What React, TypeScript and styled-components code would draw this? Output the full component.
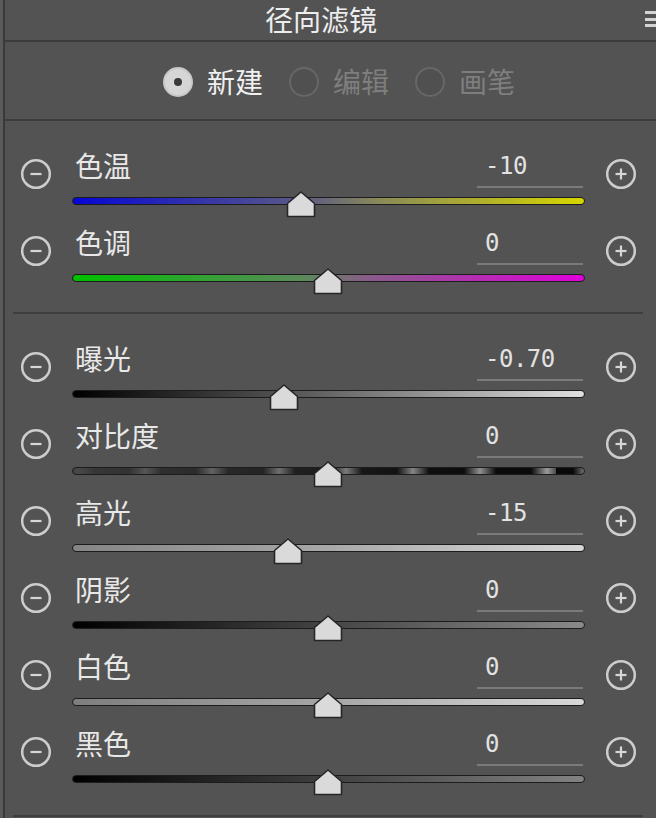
import React from "react";
import styled, { createGlobalStyle } from "styled-components";

const GlobalStyle = createGlobalStyle`
  html, body { margin: 0; padding: 0; background: #5a5a5a; }
  body {
    width: 656px;
    height: 818px;
    overflow: hidden;
    font-family: "Noto Sans CJK SC", "Noto Sans", sans-serif;
  }
`;

const Panel = styled.div`
  margin-left: 3px;
  height: 818px;
  border-left: 2px solid #3a3a3a;
  background: #535353;
  display: flex;
  flex-direction: column;
`;

const Header = styled.div`
  position: relative;
  height: 40px;
  border-bottom: 2px solid #3c3c3c;
  display: flex;
  align-items: center;
  justify-content: center;
`;

const Title = styled.div`
  margin-right: 19px;
  font-size: 28px;
  line-height: 36px;
  color: #ededed;
  margin-top: -3px;
`;

const MenuIcon = styled.div`
  position: absolute;
  right: 0;
  top: 11px;
  width: 11px;
  height: 16px;
  display: flex;
  flex-direction: column;
  justify-content: space-between;
  & > span {
    display: block;
    height: 3px;
    background: #d4d4d4;
  }
`;

const RadioBar = styled.div`
  height: 79px;
  border-bottom: 2px solid #3c3c3c;
  display: flex;
  align-items: center;
  padding-left: 158px;
  padding-top: 3px;
  box-sizing: border-box;
`;

const RadioItem = styled.div`
  display: flex;
  align-items: center;
  gap: 14px;
  margin-right: 26px;
`;

const RadioDot = styled.div<{ $on?: boolean }>`
  width: 30px;
  height: 30px;
  border-radius: 50%;
  box-sizing: border-box;
  display: flex;
  align-items: center;
  justify-content: center;
  background: ${(p) => (p.$on ? "#d6d6d6" : "#505050")};
  border: 2px solid ${(p) => (p.$on ? "#c8c8c8" : "#676767")};
  &::after {
    content: "";
    display: ${(p) => (p.$on ? "block" : "none")};
    width: 8px;
    height: 8px;
    border-radius: 50%;
    background: #3a3a3a;
  }
`;

const RadioLabel = styled.span<{ $on?: boolean }>`
  font-size: 28px;
  line-height: 36px;
  color: ${(p) => (p.$on ? "#f0f0f0" : "#7e7e7e")};
  margin-top: -2px;
`;

const Sliders = styled.div`
  padding-top: 27px;
  display: flex;
  flex-direction: column;
`;

const Row = styled.div`
  height: 77px;
  display: grid;
  grid-template-columns: 67px 513px 1fr;
`;

const IconCell = styled.div<{ $left?: boolean }>`
  padding-top: 10px;
  display: flex;
  justify-content: ${(p) => (p.$left ? "flex-start" : "center")};
  padding-left: ${(p) => (p.$left ? "15px" : "0")};
`;

const Content = styled.div`
  display: flex;
  flex-direction: column;
`;

const TopLine = styled.div`
  height: 42px;
  display: flex;
  justify-content: space-between;
  align-items: flex-start;
`;

const Label = styled.span`
  padding-left: 3px;
  font-size: 28px;
  line-height: 36px;
  color: #e8e8e8;
  margin-top: -1px;
`;

const ValueBox = styled.div`
  width: 106px;
  height: 40px;
  margin-right: 2px;
  box-sizing: border-box;
  border-bottom: 2px solid #7a7a7a;
  padding-left: 8px;
  padding-top: 2px;
  font-family: "DejaVu Sans Mono", "Liberation Mono", monospace;
  font-size: 24px;
  line-height: 32px;
  color: #e2e2e2;
  letter-spacing: -0.5px;
`;

const Track = styled.div<{ $bg: string }>`
  position: relative;
  margin-top: 7px;
  height: 8px;
  box-sizing: border-box;
  border: 1.5px solid #1c1c1c;
  border-radius: 4px;
  background: ${(p) => p.$bg};
`;

const Thumb = styled.svg`
  position: absolute;
  top: -7px;
  width: 30px;
  height: 27px;
  overflow: visible;
`;

const Separator = styled.div<{ $top: number; $bottom: number }>`
  height: 2px;
  background: #3e3e3e;
  margin: ${(p) => `${p.$top}px 13px ${p.$bottom}px 8px`};
`;

const CircleIcon: React.FC<{ plus?: boolean }> = ({ plus }) => (
  <svg width="32" height="32" viewBox="0 0 32 32">
    <circle cx="16" cy="16" r="13.8" fill="none" stroke="#cdcdcd" strokeWidth="2.5" />
    <line x1="10.5" y1="16" x2="21.5" y2="16" stroke="#d6d6d6" strokeWidth="2.2" />
    {plus && <line x1="16" y1="10.5" x2="16" y2="21.5" stroke="#d6d6d6" strokeWidth="2.2" />}
  </svg>
);

const contrastBg = `linear-gradient(to right, rgba(62,62,62,0.9) 0%, rgba(62,62,62,0.55) 35%, rgba(40,40,40,0.2) 70%, rgba(0,0,0,0) 100%) 0 0 / 100% 100%,
  repeating-linear-gradient(to right, #080808 0px, #080808 17px, #a0a0a0 33px, #080808 49px, #080808 67px) -28px 0 / 100% 100%`;

type SliderDef = { label: string; value: string; pos: number; bg: string };

const group1: SliderDef[] = [
  { label: "色温", value: "-10", pos: 44.8, bg: "linear-gradient(to right, #0606d6 0%, #5a5a86 45%, #8a8a58 60%, #d6d600 100%)" },
  { label: "色调", value: "0", pos: 50, bg: "linear-gradient(to right, #00c000 0%, #5a8a5a 45%, #8a5a8a 58%, #e000dc 100%)" },
];

const group2: SliderDef[] = [
  { label: "曝光", value: "-0.70", pos: 41.5, bg: "linear-gradient(to right, #000 0%, #5a5a5a 45%, #e0e0e0 100%)" },
  { label: "对比度", value: "0", pos: 50, bg: contrastBg },
  { label: "高光", value: "-15", pos: 42.3, bg: "linear-gradient(to right, #858585 0%, #a8a8a8 50%, #d8d8d8 100%)" },
  { label: "阴影", value: "0", pos: 50, bg: "linear-gradient(to right, #000 0%, #3e3e3e 45%, #8a8a8a 100%)" },
  { label: "白色", value: "0", pos: 50, bg: "linear-gradient(to right, #7e7e7e 0%, #a6a6a6 50%, #d8d8d8 100%)" },
  { label: "黑色", value: "0", pos: 50, bg: "linear-gradient(to right, #000 0%, #3a3a3a 45%, #828282 100%)" },
];

const SliderRow: React.FC<SliderDef> = ({ label, value, pos, bg }) => (
  <Row>
    <IconCell $left>
      <CircleIcon />
    </IconCell>
    <Content>
      <TopLine>
        <Label>{label}</Label>
        <ValueBox>{value}</ValueBox>
      </TopLine>
      <Track $bg={bg}>
        <Thumb viewBox="0 0 30 27" style={{ left: `calc(${pos}% - 16px)` }}>
          <polygon
            points="15,1 28.5,12.5 28.5,25.5 1.5,25.5 1.5,12.5"
            fill="#dadada"
            stroke="#262626"
            strokeWidth="1.6"
            strokeLinejoin="round"
          />
        </Thumb>
      </Track>
    </Content>
    <IconCell>
      <CircleIcon plus />
    </IconCell>
  </Row>
);

export default function App() {
  return (
    <>
      <GlobalStyle />
      <Panel>
        <Header>
          <Title>径向滤镜</Title>
          <MenuIcon>
            <span />
            <span />
            <span />
          </MenuIcon>
        </Header>
        <RadioBar>
          <RadioItem>
            <RadioDot $on />
            <RadioLabel $on>新建</RadioLabel>
          </RadioItem>
          <RadioItem>
            <RadioDot />
            <RadioLabel>编辑</RadioLabel>
          </RadioItem>
          <RadioItem>
            <RadioDot />
            <RadioLabel>画笔</RadioLabel>
          </RadioItem>
        </RadioBar>
        <Sliders>
          {group1.map((s) => (
            <SliderRow key={s.label} {...s} />
          ))}
          <Separator $top={10} $bottom={27} />
          {group2.map((s) => (
            <SliderRow key={s.label} {...s} />
          ))}
          <Separator $top={12} $bottom={0} />
        </Sliders>
      </Panel>
    </>
  );
}
